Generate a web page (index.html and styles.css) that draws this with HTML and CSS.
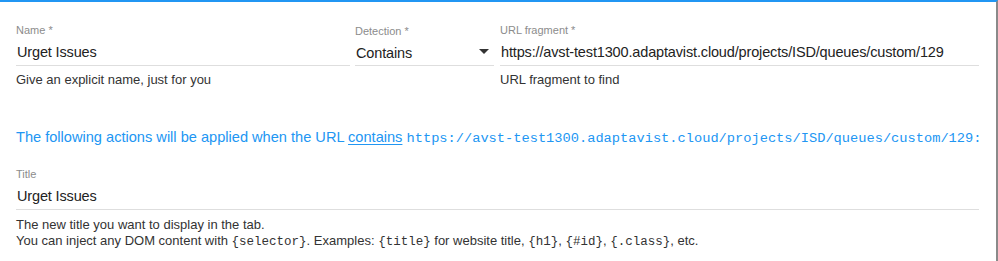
FILE: index.html
```html
<!DOCTYPE html>
<html>
<head>
<meta charset="utf-8">
<link rel="stylesheet" href="styles.css">
</head>
<body>
<div class="panel">
  <div class="row">
    <div class="field">
      <div class="label">Name *</div>
      <div class="input">Urget Issues</div>
      <div class="help">Give an explicit name, just for you</div>
    </div>
    <div class="field field-select">
      <div class="label">Detection *</div>
      <div class="input select">
        <span>Contains</span>
        <svg class="arrow" width="10" height="5" viewBox="0 0 10 5"><path d="M0 0h10L5 5z" fill="#333"/></svg>
      </div>
    </div>
    <div class="field">
      <div class="label">URL fragment *</div>
      <div class="input">https://avst-test1300.adaptavist.cloud/projects/ISD/queues/custom/129</div>
      <div class="help">URL fragment to find</div>
    </div>
  </div>
  <p class="notice">The following actions will be applied when the URL <u>contains</u> <code>https://avst-test1300.adaptavist.cloud/projects/ISD/queues/custom/129:</code></p>
  <div class="field">
    <div class="label">Title</div>
    <div class="input">Urget Issues</div>
    <div class="help help-title">The new title you want to display in the tab.<br>You can inject any DOM content with <code>{selector}</code>. Examples: <code>{title}</code> for website title, <code>{h1}</code>, <code>{#id}</code>, <code>{.class}</code>, etc.</div>
  </div>
</div>
</body>
</html>
```
FILE: styles.css
```css
html, body {
  margin: 0;
  background: #fff;
}
body {
  font-family: "Liberation Sans", Arial, sans-serif;
  color: #222;
}
.panel {
  width: 998px;
  height: 261px;
  box-sizing: border-box;
  border-top: 2px solid #2196f3;
  border-right: 2px solid #8a8a8a;
  padding: 21px 17px 0 16px;
}
.row {
  display: grid;
  grid-template-columns: 334px 139px 1fr;
  column-gap: 5px;
}
.row > .field:last-child {
  margin-left: 1px;
}
.field-select {
  padding-top: 1px;
}
.label {
  font-size: 11px;
  line-height: 14px;
  color: #8c8c8c;
}
.input {
  font-size: 14.5px;
  letter-spacing: -0.15px;
  line-height: 30px;
  height: 28px;
  color: #222;
  border-bottom: 1px solid #dedede;
  padding-left: 1px;
  white-space: nowrap;
}
.select {
  display: flex;
  align-items: center;
  justify-content: space-between;
  box-sizing: border-box;
  padding: 2px 5px 0 1px;
  line-height: 26px;
  height: 28px;
}
.arrow {
  display: block;
  margin-top: -3px;
}
.help {
  font-size: 13px;
  line-height: 16px;
  color: #333;
  margin-top: 6px;
}
.help-title {
  margin-top: 7px;
}
code {
  font-family: "Liberation Mono", monospace;
  font-size: 12.5px;
  letter-spacing: 0;
}
.notice {
  margin: 39px 0 18px;
  font-size: 14.6px;
  line-height: 20px;
  color: #2196f3;
  white-space: nowrap;
}
.notice u {
  text-underline-offset: 2px;
}
.notice code {
  font-size: 13.7px;
}
```
